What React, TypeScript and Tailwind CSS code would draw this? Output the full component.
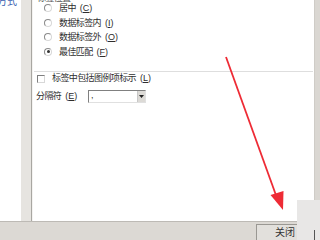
import React from 'react';

const font = { fontFamily: '"Liberation Sans", "Noto Sans CJK SC", sans-serif' };

function Radio({ checked }: { checked?: boolean }) {
  return (
    <span className="w-[8px] h-[8px] rounded-full border border-[#8a8a8a] border-r-[#d8d8d8] border-b-[#d8d8d8] bg-white flex items-center justify-center shrink-0">
      {checked && <span className="w-[3px] h-[3px] rounded-full bg-[#333]" />}
    </span>
  );
}

const options = [
  { label: '居中', key: 'C' },
  { label: '数据标签内', key: 'I' },
  { label: '数据标签外', key: 'O' },
  { label: '最佳匹配', key: 'F', checked: true },
];

function Key({ k }: { k: string }) {
  return (
    <span className="text-[9px] ml-[4px] tracking-normal">
      (<u>{k}</u>)
    </span>
  );
}

export default function App() {
  return (
    <div className="relative w-[320px] h-[240px] overflow-hidden bg-[#dcd9d4] text-[9px] text-[#2e2e2e] tracking-[-0.6px]" style={font}>
      <div className="flex h-[221px]">
        {/* left list */}
        <div className="w-[21px] bg-white shrink-0 overflow-hidden">
          <div className="ml-[-3px] mt-[-4px] text-[10px] leading-[12px] text-[#3a5fb0] whitespace-nowrap tracking-normal">方式</div>
        </div>
        {/* splitter */}
        <div className="w-[11px] bg-[#e6e4e0] border-r border-[#a9a7a2] shrink-0" />
        <div className="w-[1px] bg-[#f4f3f1] shrink-0" />
        {/* main */}
        <div className="flex-1 bg-white flex flex-col">
          <div className="mx-[1px] border-b border-[#dedede] h-[72px] flex flex-col">
            <div className="ml-[3px] mt-[-6px] h-[4px] leading-[9px] text-[9px] text-[#5a5a5a] whitespace-nowrap">标签位置</div>
            <div className="flex flex-col gap-[2.5px] mt-[4px] ml-[10px]">
              {options.map((o) => (
                <div key={o.key} className="flex items-center gap-[7px] h-[12px]">
                  <Radio checked={o.checked} />
                  <span className="whitespace-nowrap leading-[12px]">
                    {o.label}
                    <Key k={o.key} />
                  </span>
                </div>
              ))}
            </div>
          </div>
          <div className="flex items-center gap-[7px] ml-[4px] mt-[1px] h-[12px]">
            <span className="w-[8px] h-[8px] border border-[#7f7f7f] border-r-[#d8d8d8] border-b-[#d8d8d8] bg-white shrink-0" />
            <span className="whitespace-nowrap">
              标签中包括图例项标示
              <Key k="L" />
            </span>
          </div>
          <div className="flex items-center ml-[3px] mt-[5px] h-[13px]">
            <span className="w-[52px] whitespace-nowrap">
              分隔符
              <Key k="E" />
            </span>
            <div className="w-[58px] h-[13px] flex border border-[#808080] border-r-[#e0e0e0] border-b-[#e0e0e0] bg-white">
              <span className="flex-1 leading-[9px] pl-[2px]">,</span>
              <span className="w-[8px] bg-[#dcdad6] border-l border-[#c8c8c8] flex items-center justify-center">
                <svg width="5" height="3" viewBox="0 0 5 3"><path d="M0 0h5L2.5 3z" fill="#222" /></svg>
              </span>
            </div>
          </div>
        </div>
        {/* right edge */}
        <div className="w-[6px] bg-[#dad7d2] border-l border-[#cfccc7] shrink-0" />
      </div>
      {/* bottom bar */}
      <div className="h-[19px] border-t border-[#bdbab5] flex items-start pl-[256px] pt-[2px]">
        <div className="w-[60px] h-[18px] border border-[#9a9893] border-b-0 bg-[#e2e0dc] flex items-start pl-[18px] pt-[1px] text-[10px] text-[#333] leading-[14px] tracking-normal">
          关闭
        </div>
      </div>
      {/* overlay box lower right */}
      <div className="absolute left-[297px] top-[200px] w-[23px] h-[40px] bg-[#e8e7e6]">
        <div className="absolute left-[17px] top-[30px] w-[1px] h-[10px] bg-[#555]" />
      </div>
      {/* red arrow */}
      <svg className="absolute left-0 top-0" width="320" height="240" viewBox="0 0 320 240">
        <line x1="226" y1="57" x2="277" y2="198" stroke="#ee2b35" strokeWidth="1.8" />
        <path d="M270.5 195 L283 210 L283.5 191 Z" fill="#ee2b35" />
      </svg>
    </div>
  );
}
